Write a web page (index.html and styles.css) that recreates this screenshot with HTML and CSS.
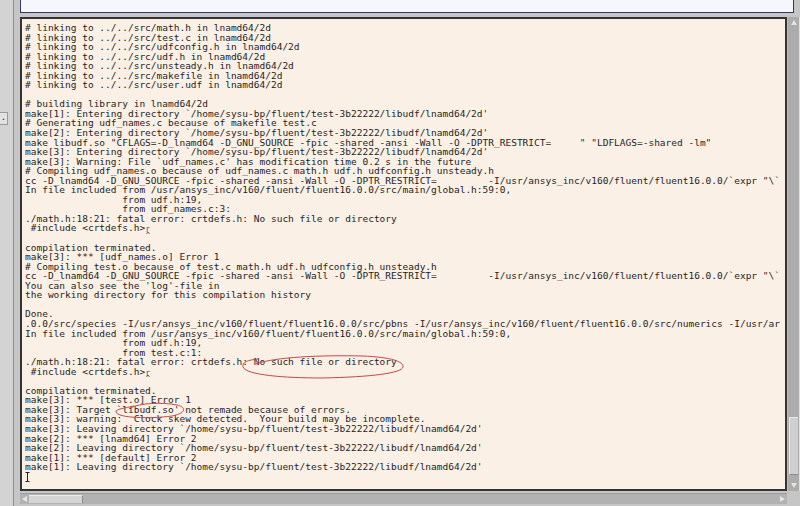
FILE: index.html
```html
<!DOCTYPE html>
<html>
<head>
<meta charset="utf-8">
<link rel="stylesheet" href="styles.css">
</head>
<body>
<div class="app">
  <div class="side">
    <div class="side-panel"><div class="side-btn">.</div></div>
  </div>
  <div class="main">
    <div class="cmd"></div>
    <div class="pane">
      <div class="log-frame">
<pre class="log"># linking to ../../src/math.h in lnamd64/2d
# linking to ../../src/test.c in lnamd64/2d
# linking to ../../src/udfconfig.h in lnamd64/2d
# linking to ../../src/udf.h in lnamd64/2d
# linking to ../../src/unsteady.h in lnamd64/2d
# linking to ../../src/makefile in lnamd64/2d
# linking to ../../src/user.udf in lnamd64/2d

# building library in lnamd64/2d
make[1]: Entering directory `/home/sysu-bp/fluent/test-3b22222/libudf/lnamd64/2d'
# Generating udf_names.c because of makefile test.c
make[2]: Entering directory `/home/sysu-bp/fluent/test-3b22222/libudf/lnamd64/2d'
make libudf.so "CFLAGS=-D_lnamd64 -D_GNU_SOURCE -fpic -shared -ansi -Wall -O -DPTR_RESTRICT=     " "LDFLAGS=-shared -lm"
make[3]: Entering directory `/home/sysu-bp/fluent/test-3b22222/libudf/lnamd64/2d'
make[3]: Warning: File `udf_names.c' has modification time 0.2 s in the future
# Compiling udf_names.o because of udf_names.c math.h udf.h udfconfig.h unsteady.h
cc -D_lnamd64 -D_GNU_SOURCE -fpic -shared -ansi -Wall -O -DPTR_RESTRICT=         -I/usr/ansys_inc/v160/fluent/fluent16.0.0/`expr "\`
In file included from /usr/ansys_inc/v160/fluent/fluent16.0.0/src/main/global.h:59:0,
                 from udf.h:19,
                 from udf_names.c:3:
./math.h:18:21: fatal error: crtdefs.h: No such file or directory
 #include &lt;crtdefs.h&gt;<span class="cr">ɼ</span>
                     <span class="caret">^</span>
compilation terminated.
make[3]: *** [udf_names.o] Error 1
# Compiling test.o because of test.c math.h udf.h udfconfig.h unsteady.h
cc -D_lnamd64 -D_GNU_SOURCE -fpic -shared -ansi -Wall -O -DPTR_RESTRICT=         -I/usr/ansys_inc/v160/fluent/fluent16.0.0/`expr "\`
You can also see the 'log'-file in
the working directory for this compilation history

Done.
.0.0/src/species -I/usr/ansys_inc/v160/fluent/fluent16.0.0/src/pbns -I/usr/ansys_inc/v160/fluent/fluent16.0.0/src/numerics -I/usr/ar
In file included from /usr/ansys_inc/v160/fluent/fluent16.0.0/src/main/global.h:59:0,
                 from udf.h:19,
                 from test.c:1:
./math.h:18:21: fatal error: crtdefs.h: No such file or directory
 #include &lt;crtdefs.h&gt;<span class="cr">ɼ</span>
                     <span class="caret">^</span>
compilation terminated.
make[3]: *** [test.o] Error 1
make[3]: Target `libudf.so' not remade because of errors.
make[3]: warning:  Clock skew detected.  Your build may be incomplete.
make[3]: Leaving directory `/home/sysu-bp/fluent/test-3b22222/libudf/lnamd64/2d'
make[2]: *** [lnamd64] Error 2
make[2]: Leaving directory `/home/sysu-bp/fluent/test-3b22222/libudf/lnamd64/2d'
make[1]: *** [default] Error 2
make[1]: Leaving directory `/home/sysu-bp/fluent/test-3b22222/libudf/lnamd64/2d'
<svg class="ibeam" width="5" height="10" viewBox="0 0 5 10"><path d="M0.5 0.5H4.5M2.5 0.5V9.5M0.5 9.5H4.5" stroke="#222" stroke-width="1" fill="none"/></svg></pre>
        <svg class="marks" width="763" height="470" viewBox="0 0 763 470">
          <path d="M234 345 C 252 338, 300 336, 340 337 C 370 338, 382 343, 381 348 C 380 354, 350 358, 300 359 C 262 359, 224 356, 221 348 C 220 343, 226 341, 236 340" stroke="#c24a4a" stroke-width="1" fill="none"/>
          <path d="M112 387 C 104 389, 93 390, 94 393 C 95 399, 128 400, 150 397 C 165 394, 164 388, 155 386 C 140 383, 118 384, 108 389" stroke="#c24a4a" stroke-width="1" fill="none"/>
        </svg>
      </div>
      <div class="vscroll">
        <div class="arrow up"></div>
        <div class="track"><div class="thumb"></div></div>
        <div class="arrow down"></div>
      </div>
    </div>
    <div class="hscroll">
      <div class="harrow left"></div>
      <div class="hthumb"></div>
      <div class="htrack"></div>
      <div class="harrow right"></div>
    </div>
  </div>
</div>
</body>
</html>
```
FILE: styles.css
```css
html, body {
  margin: 0;
  padding: 0;
}
body {
  width: 800px;
  height: 506px;
  overflow: hidden;
  background: #c6c6c6;
}
.app {
  display: flex;
  height: 506px;
}
.side {
  width: 20px;
  display: flex;
}
.side-panel {
  width: 13px;
  background: #d3d3d3;
  border-right: 1px solid #8e8e8e;
  position: relative;
}
.side-btn {
  position: absolute;
  left: 0;
  top: 112px;
  width: 7px;
  height: 11px;
  background: #e2e2e2;
  border: 1px solid #9a9a9a;
  border-left: 0;
  font: 9px "DejaVu Sans Mono", monospace;
  color: #222;
  line-height: 9px;
  text-align: center;
}
.main {
  flex: 1;
  display: flex;
  flex-direction: column;
}
.cmd {
  height: 13px;
  box-sizing: border-box;
  margin-right: 6px;
  border: 1px solid #35356f;
  border-top: 0;
  background: #f6f6fd;
}
.pane {
  margin-top: 4px;
  height: 474px;
  display: flex;
}
.log-frame {
  flex: 1;
  position: relative;
  overflow: hidden;
  border: 2px solid #343434;
  background: #faf0e6;
}
.log {
  margin: 0;
  padding: 4px 0 0 3px;
  font-family: "DejaVu Sans Mono", monospace;
  font-size: 9.5px;
  line-height: 9.55px;
  color: #1f1f1f;
  white-space: pre;
}
.cr {
  display: inline-block;
  transform: scale(0.8) translateY(1px);
  color: #444;
}
.caret {
  display: inline-block;
  transform: scale(0.75) translateY(-4px);
}
.ibeam {
  vertical-align: top;
}
.marks {
  position: absolute;
  left: 0;
  top: 0;
}
.vscroll {
  width: 13px;
  display: flex;
  flex-direction: column;
  background: #acacac;
  border-left: 1px solid #bdbdbd;
  border-right: 1px solid #e0e0e0;
  box-sizing: border-box;
}
.arrow {
  height: 10px;
  position: relative;
}
.arrow.up::after,
.arrow.down::after {
  content: "";
  position: absolute;
  left: 3px;
  border-left: 3px solid transparent;
  border-right: 3px solid transparent;
}
.arrow.up::after {
  top: 3px;
  border-bottom: 5px solid #e4e4e4;
}
.arrow.down::after {
  top: 2px;
  border-top: 5px solid #e4e4e4;
}
.track {
  flex: 1;
  display: flex;
  flex-direction: column;
  justify-content: flex-end;
}
.thumb {
  height: 56px;
  margin: 0 1px 6px;
  background: #cfcfcf;
  border-top: 1px solid #e8e8e8;
  border-left: 1px solid #e8e8e8;
  border-bottom: 1px solid #8a8a8a;
}
.hscroll {
  margin-top: 2px;
  margin-right: 13px;
  height: 10px;
  display: flex;
  background: #b2b2b2;
  border-top: 1px solid #9c9c9c;
}
.harrow {
  width: 9px;
  position: relative;
}
.harrow.left::after {
  content: "";
  position: absolute;
  left: 2px;
  top: 2px;
  border-top: 3px solid transparent;
  border-bottom: 3px solid transparent;
  border-right: 5px solid #e6e6e6;
}
.harrow.right::after {
  content: "";
  position: absolute;
  left: 2px;
  top: 2px;
  border-top: 3px solid transparent;
  border-bottom: 3px solid transparent;
  border-left: 5px solid #e6e6e6;
}
.hthumb {
  width: 53px;
  margin: 1px 0;
  background: #d4d4d4;
  border-top: 1px solid #ececec;
  border-right: 1px solid #8a8a8a;
}
.htrack {
  flex: 1;
}
```
